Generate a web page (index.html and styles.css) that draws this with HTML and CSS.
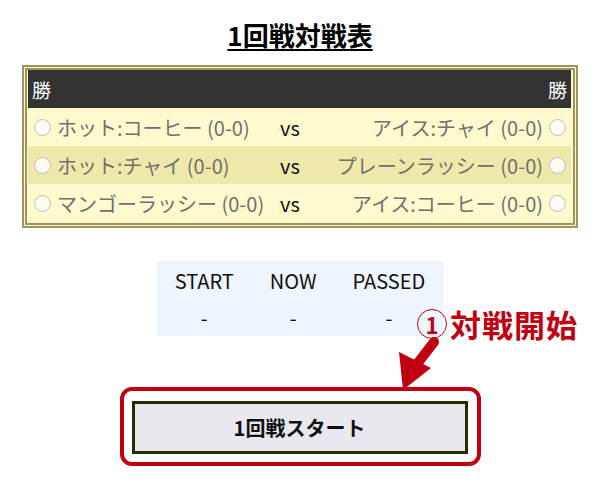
FILE: index.html
```html
<!DOCTYPE html>
<html lang="ja">
<head>
<meta charset="utf-8">
<link rel="stylesheet" href="styles.css">
</head>
<body>
<main class="page">
  <h1 class="title">1回戦対戦表</h1>
  <div class="bracket">
    <div class="row head">
      <div class="cell left">勝</div>
      <div class="cell mid"></div>
      <div class="cell right">勝</div>
    </div>
    <div class="row odd">
      <div class="cell left"><span class="radio"></span><span class="lbl">ホット:コーヒー (0-0)</span></div>
      <div class="cell mid">vs</div>
      <div class="cell right"><span class="lbl">アイス:チャイ (0-0)</span><span class="radio"></span></div>
    </div>
    <div class="row even">
      <div class="cell left"><span class="radio"></span><span class="lbl">ホット:チャイ (0-0)</span></div>
      <div class="cell mid">vs</div>
      <div class="cell right"><span class="lbl">プレーンラッシー (0-0)</span><span class="radio"></span></div>
    </div>
    <div class="row odd">
      <div class="cell left"><span class="radio"></span><span class="lbl">マンゴーラッシー (0-0)</span></div>
      <div class="cell mid">vs</div>
      <div class="cell right"><span class="lbl">アイス:コーヒー (0-0)</span><span class="radio"></span></div>
    </div>
  </div>

  <table class="stats">
    <tr><th>START</th><th>NOW</th><th>PASSED</th></tr>
    <tr><td>-</td><td>-</td><td>-</td></tr>
  </table>

  <div class="frame">
    <button class="start">1回戦スタート</button>
  </div>

  <div class="note"><span class="num">1</span>対戦開始</div>
  <svg class="arrow" width="50" height="60" viewBox="390 335 50 60">
    <line x1="434" y1="342" x2="417" y2="364" stroke="#c00010" stroke-width="10" stroke-linecap="round"/>
    <polygon points="399,352 431,368 403,390" fill="#c00010"/>
  </svg>
</main>
</body>
</html>
```
FILE: styles.css
```css
html, body {
  margin: 0;
  padding: 0;
  background: #fff;
}
body {
  font-family: "Noto Sans CJK JP", "Noto Sans", sans-serif;
  color: #111;
}
.page {
  position: relative;
  width: 600px;
  height: 480px;
  display: flex;
  flex-direction: column;
  align-items: center;
}
.title {
  margin: 19px 0 0;
  font-size: 26px;
  line-height: 31px;
  font-weight: 700;
  text-decoration: underline;
  text-decoration-thickness: 2px;
  text-underline-offset: 3px;
  color: #000;
}
.bracket {
  margin-top: 15px;
  width: 543px;
  border: 5px double #9f9460;
  background: #fffacd;
  padding: 0 2px 1px 1px;
  display: flex;
  flex-direction: column;
}
.row {
  display: grid;
  grid-template-columns: 243px 38px 1fr;
  height: 38px;
  align-items: center;
  font-size: 20px;
}
.row.head {
  background: #333;
  color: #fff;
  font-size: 19px;
}
.row.odd { background: #fffacd; }
.row.even { background: #eee8aa; }
.cell {
  display: flex;
  align-items: center;
  white-space: nowrap;
}
.cell.left {
  padding-left: 6px;
  gap: 6px;
}
.row.head .cell.left { padding-left: 4px; }
.cell.right {
  justify-content: flex-end;
  padding-right: 5px;
  gap: 6px;
}
.row.head .cell.right { padding-right: 4px; }
.cell.mid {
  padding-left: 9px;
  color: #111;
}
.lbl { color: #707070; }
.radio {
  width: 15px;
  height: 15px;
  border-radius: 50%;
  border: 1px solid #bdbcb4;
  background: #fbfbf2;
  flex: none;
}
.stats {
  margin-top: 33px;
  border-collapse: collapse;
  background: #eef5fd;
  font-size: 20px;
}
.stats th, .stats td {
  padding: 0 18px;
  text-align: center;
  font-weight: 400;
  color: #111;
}
.stats th { height: 38px; padding-top: 0; vertical-align: middle; }
.stats td { height: 37px; vertical-align: middle; }
.frame {
  margin-top: 51px;
  border: 4px solid #c00010;
  border-radius: 12px;
  padding: 10px 9px 8px 8px;
}
.start {
  display: block;
  width: 336px;
  height: 53px;
  border: 3px solid #2a2a05;
  background: #e9e8ee;
  font-family: "Noto Sans CJK JP", sans-serif;
  font-size: 20px;
  font-weight: 700;
  color: #111;
  padding: 0;
}
.note {
  position: absolute;
  left: 417px;
  top: 304px;
  display: flex;
  align-items: center;
  color: #c00010;
  font-size: 31px;
  font-weight: 700;
  line-height: 40px;
  letter-spacing: 1px;
}
.num {
  width: 28px;
  height: 28px;
  border: 1.5px solid #c00010;
  border-radius: 50%;
  display: flex;
  align-items: center;
  justify-content: center;
  font-size: 22px;
  line-height: 1;
  margin-right: 3px;
  letter-spacing: 0;
}
.arrow {
  position: absolute;
  left: 390px;
  top: 335px;
}
```
